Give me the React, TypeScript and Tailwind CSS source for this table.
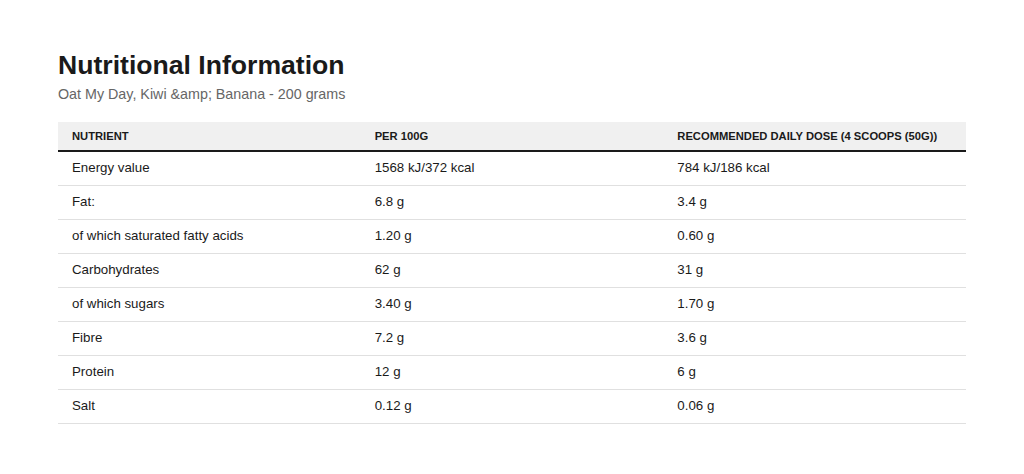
const ROWS = [
  ["Energy value", "1568 kJ/372 kcal", "784 kJ/186 kcal"],
  ["Fat:", "6.8 g", "3.4 g"],
  ["of which saturated fatty acids", "1.20 g", "0.60 g"],
  ["Carbohydrates", "62 g", "31 g"],
  ["of which sugars", "3.40 g", "1.70 g"],
  ["Fibre", "7.2 g", "3.6 g"],
  ["Protein", "12 g", "6 g"],
  ["Salt", "0.12 g", "0.06 g"],
];

export default function App() {
  return (
    <div className="min-h-[474px] bg-white px-[58px] pt-[47px] font-['Liberation_Sans',Arial,sans-serif] text-[#1a1a1a]">
      <h2 className="text-[26.6px] font-bold leading-[36px]">Nutritional Information</h2>
      <p className="mt-[1px] text-[14.3px] leading-[20px] text-[#666]">
        Oat My Day, Kiwi &amp;amp; Banana - 200 grams
      </p>

      <table className="mt-[18px] w-full table-fixed border-collapse text-left">
        <thead>
          <tr className="border-b-2 border-[#1a1a1a] bg-[#f0f0f0]">
            <th className="h-[29px] px-[14px] text-[11.2px] font-bold uppercase">Nutrient</th>
            <th className="h-[29px] px-[14px] text-[11.2px] font-bold uppercase">Per 100g</th>
            <th className="h-[29px] px-[14px] text-[11.2px] font-bold uppercase">
              Recommended daily dose (4 scoops (50g))
            </th>
          </tr>
        </thead>
        <tbody>
          {ROWS.map((row) => (
            <tr key={row[0]} className="border-b border-[#e0e0e0]">
              {row.map((cell, i) => (
                <td key={i} className="h-[34px] px-[14px] text-[13.3px] font-normal">
                  {cell}
                </td>
              ))}
            </tr>
          ))}
        </tbody>
      </table>
    </div>
  );
}
